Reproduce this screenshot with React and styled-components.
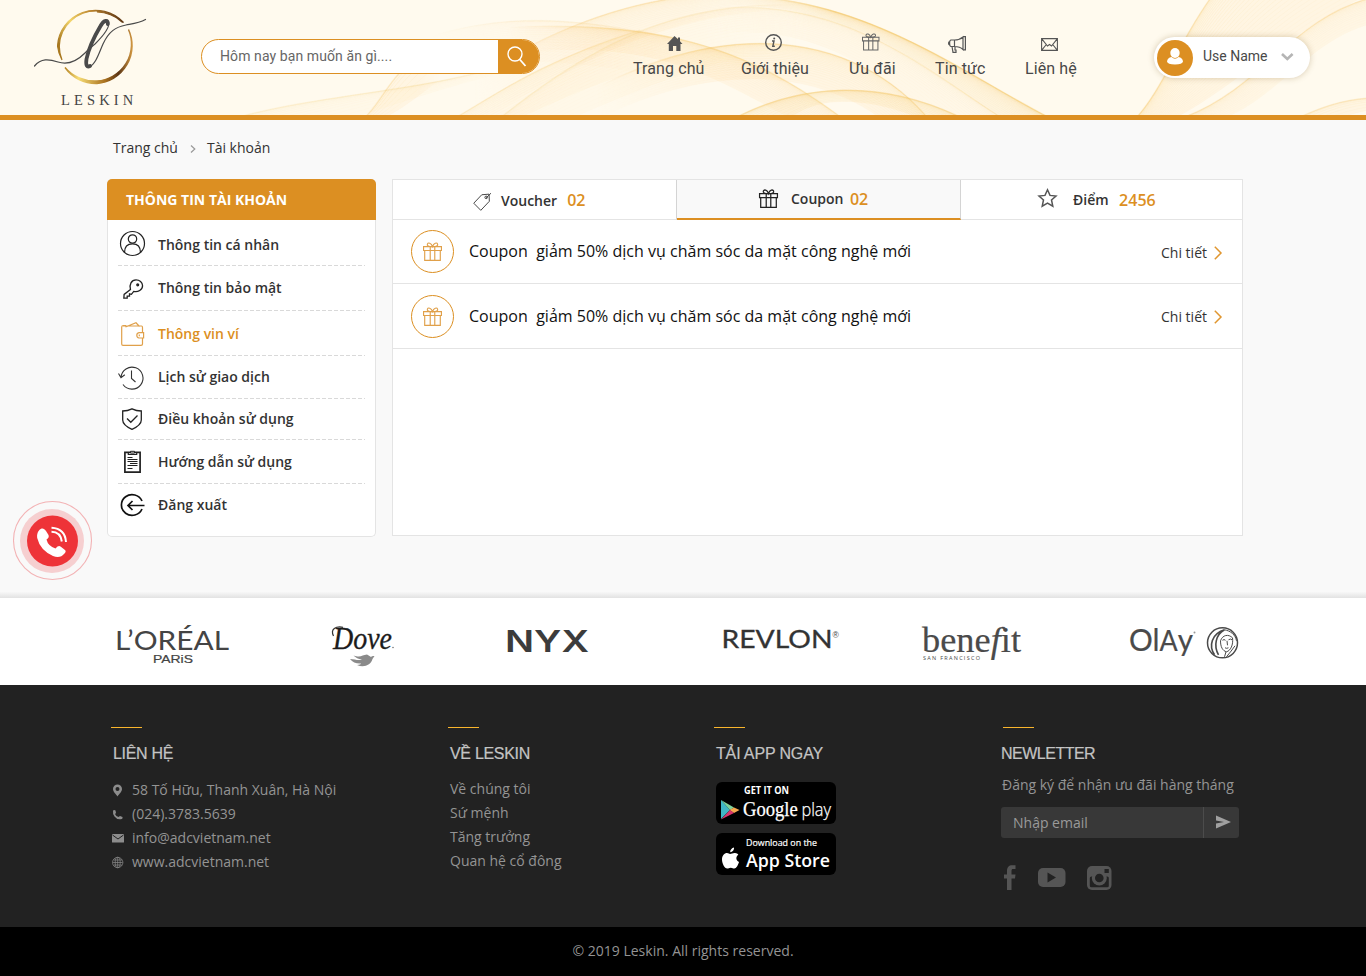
import React from "react";
import styled, { createGlobalStyle } from "styled-components";

const GOLD = "#dc8f22";
const OPEN = '"Open Sans", "Noto Sans", sans-serif';
const ROBOTO = 'Roboto, "Liberation Sans", sans-serif';
const ARIAL = '"Liberation Sans", Arial, sans-serif';

const GlobalStyle = createGlobalStyle`
  * { box-sizing: border-box; }
  body { margin: 0; background: #f9f9f9; font-family: ${OPEN}; color: #333; }
  a { color: inherit; text-decoration: none; }
  svg { display: block; flex: none; overflow: visible; }
`;

const Page = styled.div`
  width: 1366px;
  height: 976px;
  display: flex;
  flex-direction: column;
  overflow: hidden;
`;

/* ---------- header ---------- */

const Header = styled.header`
  position: relative;
  height: 120px;
  flex: none;
  display: flex;
  align-items: flex-start;
  background: #fffaee;
  border-bottom: 5px solid ${GOLD};
`;

const WaveArt = styled.svg`
  position: absolute;
  left: 0;
  top: 0;
  overflow: hidden;
`;

const LogoLink = styled.a`
  position: relative;
  margin-left: 25px;
  width: 130px;
  height: 115px;
`;

const SearchBox = styled.form`
  position: relative;
  display: flex;
  margin: 39px 0 0 46px;
  width: 339px;
  height: 35px;
  border: 1px solid ${GOLD};
  border-radius: 18px;
  background: #fff;
  overflow: hidden;
`;

const SearchHint = styled.span`
  flex: 1;
  padding-left: 18px;
  font: 400 14px/33px ${ROBOTO};
  letter-spacing: 0.09px;
  color: #666;
`;

const SearchButton = styled.span`
  width: 41px;
  height: 35px;
  padding: 6px 0 0 9px;
  background: ${GOLD};
`;

const Nav = styled.nav`
  position: relative;
  display: flex;
  margin: 32px 0 0 93px;
`;

const NavItem = styled.a`
  display: flex;
  flex-direction: column;
  width: ${(p) => p.$w}px;
  margin-right: ${(p) => p.$gap}px;
  font: 400 16px/20px ${ROBOTO};
  letter-spacing: 0.1px;
  color: #484848;
  white-space: nowrap;
`;

const NavGlyph = styled.span`
  height: 27px;
  padding: ${(p) => p.$top}px 0 0 ${(p) => p.$left}px;
`;

const UserPill = styled.div`
  position: relative;
  display: flex;
  align-items: center;
  margin: 37px 0 0 77px;
  width: 156px;
  height: 41px;
  padding-left: 3px;
  border-radius: 21px;
  background: #fff;
  box-shadow: 0 0 6px rgba(120, 90, 30, 0.3);
`;

const UserName = styled.span`
  width: 88px;
  padding: 0 0 3px 10px;
  font: 400 14px/20px ${ROBOTO};
  color: #484848;
  white-space: nowrap;
`;

/* ---------- body ---------- */

const Crumbs = styled.div`
  display: flex;
  align-items: center;
  height: 59px;
  padding: 0 0 3px 113px;
  font-size: 14px;
  line-height: 20px;
  color: #333;
`;

const CrumbArrow = styled.svg`
  margin: 2px 11px 0 12px;
`;

const Columns = styled.main`
  display: flex;
  align-items: flex-start;
  gap: 16px;
  padding-left: 107px;
  height: 413px;
`;

const SideCard = styled.aside`
  width: 269px;
  height: 358px;
  border: 1px solid #e4e4e4;
  border-top: 0;
  border-radius: 5px;
  background: #fff;
`;

const SideTitle = styled.h2`
  margin: 0 -1px;
  height: 41px;
  padding-left: 19px;
  border-radius: 5px 5px 0 0;
  background: ${GOLD};
  color: #fff;
  font: 700 14px/41px ${OPEN};
`;

const SideRow = styled.a`
  display: flex;
  height: ${(p) => p.$h}px;
  margin: 0 10px;
  background: ${(p) =>
    p.$last
      ? "none"
      : "repeating-linear-gradient(90deg, #d9d9d9 0 4px, transparent 4px 6px) left bottom / 100% 1px no-repeat"};
  color: ${(p) => (p.$active ? GOLD : "#333")};
`;

const SideGlyph = styled.span`
  width: 40px;
  padding: ${(p) => p.$top}px 0 0 ${(p) => p.$left}px;
`;

const SideLabel = styled.span`
  padding-top: ${(p) => p.$top}px;
  font: 600 14px/20px ${OPEN};
`;

const Panel = styled.section`
  width: 851px;
  height: 357px;
  border: 1px solid #e4e4e4;
  background: #fff;
`;

const Tabs = styled.div`
  display: flex;
  height: 40px;
`;

const Tab = styled.div`
  display: flex;
  align-items: flex-start;
  width: ${(p) => p.$w}px;
  padding-left: ${(p) => p.$pad}px;
  border-bottom: ${(p) => (p.$active ? `2px solid ${GOLD}` : "1px solid #e4e4e4")};
  border-right: ${(p) => (p.$last ? "0" : "1px solid #d4d4d4")};
  background: ${(p) => (p.$active ? "#f9f9f9" : "#fff")};
`;

const TabGlyph = styled.span`
  width: ${(p) => p.$w}px;
  padding-top: ${(p) => p.$top}px;
`;

const TabLabel = styled.span`
  padding-top: ${(p) => p.$top}px;
  margin-right: ${(p) => p.$gap}px;
  font: 600 14px/20px ${OPEN};
`;

const TabCount = styled.span`
  padding-top: ${(p) => p.$top}px;
  font: 600 16px/20px ${OPEN};
  color: ${GOLD};
`;

const CouponRow = styled.div`
  display: flex;
  align-items: center;
  height: ${(p) => p.$h}px;
  padding: 0 20px 0 18px;
  border-bottom: 1px solid #e4e4e4;
`;

const CouponBadge = styled.span`
  display: flex;
  align-items: center;
  justify-content: center;
  width: 43px;
  height: 43px;
  border: 1.3px solid ${GOLD};
  border-radius: 50%;
`;

const CouponText = styled.span`
  flex: 1;
  padding: 0 0 1px 15px;
  font: 400 16px/24px ${OPEN};
  letter-spacing: 0.01px;
  color: #111;
  white-space: pre;
`;

const DetailLink = styled.a`
  display: flex;
  align-items: center;
  gap: 7px;
  font: 400 14px/20px ${OPEN};
  padding-top: 2px;
`;

const CallButton = styled.a`
  position: absolute;
  left: 12px;
  top: 500px;
`;

/* ---------- brands ---------- */

const ShadowEdge = styled.div`
  height: 6px;
  flex: none;
  background: linear-gradient(#f7f7f7, #e2e2e2);
`;

const Brands = styled.section`
  display: flex;
  flex: none;
  height: 87px;
  background: #fff;
`;

const BrandSlot = styled.svg`
  margin-left: ${(p) => p.$gap}px;
`;

/* ---------- footer ---------- */

const Footer = styled.footer`
  display: grid;
  flex: none;
  grid-template-columns: 337px 266px 287px 1fr;
  height: 242px;
  padding: 42px 0 0 111px;
  background: #222;
  color: #949494;
`;

const FootCol = styled.div`
  display: flex;
  flex-direction: column;
  align-items: flex-start;
  padding-left: ${(p) => p.$pad}px;
`;

const FootRule = styled.div`
  width: 31px;
  height: 1px;
  margin-left: ${(p) => p.$shift}px;
  background: #f9b52c;
`;

const FootTitle = styled.h3`
  margin: 16px 0 0;
  font: 400 16px/20px ${ARIAL};
  letter-spacing: ${(p) => p.$ls ?? -0.3}px;
  color: #c4c4c4;
  -webkit-text-stroke: 0.2px #c4c4c4;
`;

const FootList = styled.ul`
  list-style: none;
  margin: ${(p) => p.$top}px 0 0;
  padding: 0;
`;

const FootItem = styled.li`
  display: flex;
  align-items: center;
  height: 24px;
  font: 400 14px/24px ${OPEN};
`;

const FootGlyph = styled.span`
  display: flex;
  width: 20px;
  margin-left: -1px;
  padding-top: 1px;
`;

const StoreBadge = styled.svg`
  margin-top: ${(p) => p.$top}px;
`;

const NewsText = styled.p`
  margin: 11px 0 0 1px;
  font: 400 14px/20px ${OPEN};
  white-space: nowrap;
`;

const NewsForm = styled.form`
  display: flex;
  width: 238px;
  height: 31px;
  margin-top: 12px;
  border-radius: 3px;
  background: #383838;
`;

const NewsHint = styled.span`
  width: 203px;
  padding-left: 12px;
  border-right: 1px solid #4c4c4c;
  font: 400 14px/31px ${OPEN};
  color: #9a9a9a;
`;

const NewsSend = styled.span`
  padding: 8px 0 0 12px;
`;

const Socials = styled.div`
  display: flex;
  align-items: center;
  gap: 22px;
  margin: 27px 0 0 2.5px;
`;

const Copyright = styled.div`
  flex: 1;
  background: #000;
  color: #949494;
  text-align: center;
  font: 400 14px/48px ${OPEN};
  letter-spacing: 0.01px;
`;

/* ---------- drawings ---------- */

/* A ribbon is a sheaf of thin curves blended between two edge curves; the
   lines are strongest at the first edge and thin out towards the second.
   An end that stops inside the header dissolves (fadeIn, fadeOut). */
const ribbons = [
  { a: [430, 108, 590, -8, 710, -22, 860, 4], b: [440, 150, 600, 40, 700, 0, 860, 10], n: 24, o: 0.11, fadeIn: true, fadeOut: true },
  { a: [720, -4, 860, -8, 960, 72, 1050, 118], b: [690, 6, 850, -6, 920, 66, 1002, 118], n: 24, o: 0.19, fadeIn: true },
  { a: [500, 118, 620, 22, 700, 2, 810, 5], b: [520, 140, 640, 90, 760, 30, 840, 60], n: 24, o: 0.06, fadeOut: true },
  { a: [700, 10, 840, -8, 920, 66, 1002, 118], b: [680, 40, 800, 10, 880, 70, 930, 118], n: 22, o: 0.08, fadeIn: true },
  { a: [560, 110, 690, 24, 840, 16, 928, 118], b: [560, 140, 680, 66, 800, 60, 880, 118], n: 26, o: 0.14, fadeIn: true },
  { a: [470, 30, 660, 14, 750, 50, 842, 118], b: [470, 60, 640, 30, 700, 70, 790, 118], n: 24, o: 0.13, fadeIn: true },
  { a: [735, 118, 800, 84, 880, 78, 962, 118], b: [790, 118, 820, 94, 870, 98, 920, 118], n: 14, o: 0.18 },
  { a: [235, 118, 330, 92, 430, 92, 520, 60], b: [330, 124, 400, 105, 440, 85, 560, 60], n: 14, o: 0.07, fadeOut: true },
  { a: [364, 118, 376, 108, 384, 90, 400, 72], b: [384, 118, 410, 105, 430, 85, 452, 72], n: 9, o: 0.14, fadeOut: true },
  { a: [455, 118, 500, 92, 540, 62, 640, 30], b: [515, 120, 570, 95, 620, 70, 720, 50], n: 20, o: 0.09, fadeOut: true },
  { a: [400, 48, 480, 14, 560, 12, 680, 40], b: [420, 80, 520, 50, 590, 60, 720, 90], n: 22, o: 0.05, fadeIn: true, fadeOut: true },
  { a: [1136, 118, 1162, 90, 1180, 40, 1212, -4], b: [1175, 118, 1230, 90, 1290, 30, 1370, -6], n: 34, o: 0.14 },
  { a: [1182, 118, 1260, 90, 1290, 20, 1370, -2], b: [1225, 118, 1280, 95, 1310, 40, 1370, 24], n: 20, o: 0.11 },
  { a: [1298, 118, 1320, 108, 1340, 100, 1370, 98], b: [1340, 118, 1350, 114, 1360, 112, 1370, 110], n: 8, o: 0.14 },
];

const curve = (p) => `M${p[0]} ${p[1]}C${p.slice(2).join(" ")}`;
const blend = (a, b, t) => a.map((v, i) => +(v + (b[i] - v) * t).toFixed(1));
const sheet = ({ a, b }) =>
  `${curve(a)}L${b[6]} ${b[7]}C${b[4]} ${b[5]} ${b[2]} ${b[3]} ${b[0]} ${b[1]}Z`;

const fadeStops = (r) => [
  [0, r.fadeIn ? 0 : 1],
  [0.1, r.fadeIn ? 0 : 1],
  [0.4, 1],
  [0.6, 1],
  [0.88, r.fadeOut ? 0 : 1],
  [1, r.fadeOut ? 0 : 1],
];

const Waves = () => (
  <WaveArt width="1366" height="115" viewBox="0 0 1366 115">
    {ribbons.map((r, k) => {
      const x1 = Math.min(r.a[0], r.b[0]);
      const x2 = Math.max(r.a[6], r.b[6]);
      return (
        <g key={k}>
          <linearGradient id={`fade${k}`} gradientUnits="userSpaceOnUse" x1={x1} y1="0" x2={x2} y2="0">
            {fadeStops(r).map(([at, v]) => (
              <stop key={at} offset={at} stopColor="#fff" stopOpacity={v} />
            ))}
          </linearGradient>
          <mask id={`mask${k}`} maskUnits="userSpaceOnUse" x="0" y="0" width="1366" height="115">
            <rect width="1366" height="115" fill={`url(#fade${k})`} />
          </mask>
          <g mask={`url(#mask${k})`} fill="none" stroke="#f3c25c">
            <path d={sheet(r)} fill="#fbd68a" fillOpacity={r.o * 0.85} stroke="none" />
            {Array.from({ length: r.n }, (_, i) => {
              const t = i / (r.n - 1);
              return (
                <path key={i} d={curve(blend(r.a, r.b, t * t))} strokeWidth="0.7" strokeOpacity={r.o * (1.3 - t)} />
              );
            })}
            <path d={curve(r.a)} strokeWidth="1.6" strokeOpacity={r.o} />
          </g>
        </g>
      );
    })}
  </WaveArt>
);

const Logo = () => (
  <svg width="130" height="115" viewBox="0 0 130 115">
    <defs>
      <linearGradient id="ringTop" x1="0" y1="0.6" x2="1" y2="0.2">
        <stop offset="0" stopColor="#a8781f" />
        <stop offset="0.3" stopColor="#f3d56b" />
        <stop offset="0.65" stopColor="#b9822c" />
        <stop offset="1" stopColor="#5b3413" />
      </linearGradient>
      <linearGradient id="ringLow" x1="0" y1="0.5" x2="1" y2="0.5">
        <stop offset="0" stopColor="#b68424" />
        <stop offset="0.2" stopColor="#f6dc74" />
        <stop offset="0.6" stopColor="#a8701f" />
        <stop offset="0.8" stopColor="#5b3413" />
        <stop offset="1" stopColor="#cf9540" />
      </linearGradient>
    </defs>
    <path d="M37 60A37.5 37.5 0 0 1 32.500 46A38 37.500 0 0 1 98.500 22.500L97 22A37.500 36 0 0 0 72 12L74 11A37 36 0 0 0 34.300 46A37 37 0 0 0 37 60Z" fill="url(#ringTop)" stroke="url(#ringTop)" strokeWidth="1.200" />
    <path d="M103.500 29.500A38 38 0 0 1 72 83.500A38 38 0 0 1 40 67.500A38 36 0 0 0 72 81A37 37 0 0 0 103.500 29.500Z" fill="url(#ringLow)" stroke="url(#ringLow)" strokeWidth="1.400" />
    <g fill="none" stroke="#4a4a4a" strokeLinecap="round">
      <path d="M9.500 66C16 58 24 59 33 62C45 66 54 59 60 53C62 51 66 47 70 44C78 36 85 27 83.500 22.500" strokeWidth="1.200" />
      <path d="M82.800 24C83.500 19.500 79 19.500 75.500 26C69 37 63.500 49 61.500 59C60.500 65.500 62 67.500 65 66" strokeWidth="3.800" />
      <path d="M64 67C71 64 74 53 78 44C84 31 91 27 101 25C109 23.500 114 23 120.500 19.500" strokeWidth="1.200" />
    </g>
    <text x="36" y="104.700" fontFamily="Liberation Serif, serif" fontSize="14.500" letterSpacing="4.150" fill="#444">LESKIN</text>
  </svg>
);

const GiftIcon = ({ size = 20, color = "currentColor", sw = 1.1 }) => (
  <svg width={size} height={size} viewBox="0 0 20 20" fill="none" stroke={color} strokeWidth={sw}>
    <path d="M.6 4.800H19.400V9H.6ZM1.800 9V19.400H18.200V9M7.600 4.800V19.400M12.400 4.800V19.400" />
    <path d="M10 4.800C6 4.900 4 4 4.600 2.200C5.400.2 8.600.8 10 4.800C11.400.8 14.600.2 15.400 2.200C16 4 14 4.900 10 4.800Z" />
  </svg>
);

const ChevronRight = ({ w, h, color, sw }) => (
  <svg width={w} height={h} viewBox={`0 0 ${w} ${h}`} fill="none" stroke={color} strokeWidth={sw}>
    <path d={`M.8 .8L${w - 1} ${h / 2}L.8 ${h - 0.8}`} />
  </svg>
);

const navItems = [
  {
    label: "Trang chủ", w: 72, gap: 36, left: 34, top: 4,
    icon: (
      <svg width="16" height="15" viewBox="0 0 16 15" fill="#555">
        <path d="M7.500 0L11 3.300V1.500H13V5.200L15.500 8H13.500V15H9.300V10H6V15H1.800V8H0Z" />
      </svg>
    ),
  },
  {
    label: "Giới thiệu", w: 68, gap: 40, left: 24, top: 2,
    icon: (
      <svg width="17" height="17" viewBox="0 0 17 17" fill="none" stroke="#555">
        <circle cx="8.500" cy="8.500" r="7.800" strokeWidth="1.400" />
        <path d="M7 7H9L7.800 12.300H9.800" strokeWidth="1.400" />
        <circle cx="9.200" cy="4.500" r="1" fill="#555" stroke="none" />
      </svg>
    ),
  },
  {
    label: "Ưu đãi", w: 46, gap: 40, left: 13, top: 1,
    icon: <GiftIcon size={17.5} color="#666" sw={1.15} />,
  },
  {
    label: "Tin tức", w: 50, gap: 40, left: 13, top: 4,
    icon: (
      <svg width="18" height="17" viewBox="0 0 18 17" fill="none" stroke="#555" strokeWidth="1.200">
        <path d="M6.500 4C10 4 13 2.800 15 1V13.500C13 11.600 10 10.500 6.500 10.500ZM15 .6H17.400V13.800H15M6.500 4H3C1.800 4 1.600 5 1.600 7.300C1.600 9.600 1.800 10.500 3 10.500H6.500M1.600 5.500C.2 6 .2 8.500 1.600 9M4 10.500L5 16.300H8V14H7V10.500" />
      </svg>
    ),
  },
  {
    label: "Liên hệ", w: 52, gap: 0, left: 16, top: 6,
    icon: (
      <svg width="17" height="13" viewBox="0 0 17 13" fill="none" stroke="#555" strokeWidth="1.100">
        <path d="M.6 .6H16.400V12.400H.6ZM.6 .6L6.500 8L8.500 6.500L10.500 8L16.400 .6M.6 12.400L5.300 6.500M16.400 12.400L11.700 6.500" />
      </svg>
    ),
  },
];

const sideItems = [
  {
    label: "Thông tin cá nhân", h: 46, text: 15, left: 2, top: 11,
    icon: (
      <svg width="26" height="26" viewBox="0 0 26 26" fill="none" stroke="#222" strokeWidth="1.200">
        <circle cx="12.500" cy="12.500" r="12" />
        <circle cx="12.500" cy="8" r="4.200" />
        <path d="M4.500 21.500C4.500 15.500 8 12.900 12.500 12.900S20.500 15.500 20.500 21.500" />
      </svg>
    ),
  },
  {
    label: "Thông tin bảo mật", h: 45, text: 12, left: 5, top: 13,
    icon: (
      <svg width="20.500" height="20.500" viewBox="0 0 22 22" fill="none" stroke="#222" strokeWidth="1.400">
        <path d="M8 11.200L1.200 16.500L.9 20.600H4.500V18.300H7V16L9 16.500L11.500 13.300C16 14.600 21 11.500 21 7.300C21 3.500 17.600 .9 14 .9C9 .9 6.500 6 8 11.200Z" />
        <circle cx="15.800" cy="6.300" r="1" fill="#222" />
      </svg>
    ),
  },
  {
    label: "Thông vin ví", h: 45, text: 13, left: 3, top: 11, active: true,
    icon: (
      <svg width="24" height="24" viewBox="0 0 24 24" fill="none" stroke="#e0a04a" strokeWidth="1.200">
        <path d="M2 4H20.500Q21.500 4 21.500 5.500V10.500M21.500 16V22Q21.500 23.300 20 23.300H2Q.7 23.300 .7 22V5Q.7 3.500 2.500 3.500H5M4.500 5L15 .8L18.500 4.500" />
        <path d="M22.600 10.600H18Q15.800 11 15.800 13.300Q15.800 15.800 18 16H22.600ZM18.300 12.500V14.300" />
      </svg>
    ),
  },
  {
    label: "Lịch sử giao dịch", h: 43, text: 11, left: 0, top: 9.5,
    icon: (
      <svg width="26" height="24" viewBox="0 0 26 24" fill="none" stroke="#333" strokeWidth="1.100">
        <path d="M3 11.500A11 11 0 1 1 5 18.500M.5 7.500L3 11.800L6.800 8.800M13.500 4.500V12.500L17.500 16" />
      </svg>
    ),
  },
  {
    label: "Điều khoản sử dụng", h: 41, text: 10, left: 4, top: 9,
    icon: (
      <svg width="20" height="22" viewBox="0 0 20 22" fill="none" stroke="#222" strokeWidth="1.300">
        <path d="M10 .8C13 2.300 16 3 19.300 3V12C19.300 17 14 19.500 10 21.300C6 19.500 .7 17 .7 12V3C4 3 7 2.300 10 .8ZM5 10.500L8.800 14.300L15.500 7.500" />
      </svg>
    ),
  },
  {
    label: "Hướng dẫn sử dụng", h: 44, text: 12, left: 6, top: 11,
    icon: (
      <svg width="17" height="22" viewBox="0 0 17 22" fill="none" stroke="#222">
        <path d="M.9 1.400H16.100V21.100H.9Z" strokeWidth="1.700" />
        <path d="M4.300 1.500V3.500H12.700V1.500" strokeWidth="1.200" />
        <path d="M3.500 6.500H8.500M3.500 8.500H13.500M3.500 10.500H13.500M6 12.500H13.500M3.500 14.500H13.500M3.500 17.500H8.500" strokeWidth="1" />
        <path d="M6.500 .3H10.500V2H6.500Z" fill="#fff" strokeWidth="1" />
      </svg>
    ),
  },
  {
    label: "Đăng xuất", h: 44, text: 11, left: 2, top: 10, last: true,
    icon: (
      <svg width="25" height="23" viewBox="0 0 25 23" fill="none" stroke="#111" strokeWidth="1.700">
        <path d="M22 7A10.700 10.400 0 1 0 22 15M24.500 11.500H8M12.500 7L8 11.500L12.500 16" />
      </svg>
    ),
  },
];

const CallArt = () => (
  <svg width="81" height="81" viewBox="0 0 81 81">
    <circle cx="40.500" cy="40.500" r="39" fill="none" stroke="#f3b3b5" strokeWidth="1.100" />
    <circle cx="40" cy="41" r="32" fill="#f6cfd0" />
    <circle cx="40.500" cy="41" r="25.500" fill="#ee3338" />
    <path d="M27 30.500C29.500 27.500 32 28 34 31L36.500 35Q37.500 37.500 34.500 39.500Q36 46 43.500 48.500Q46.500 45 48.500 46.500L53 50Q54.500 51.500 52.500 53.500Q48 59 41 56Q28 50 25.200 38Q24.500 33.500 27 30.500Z" fill="#fff" />
    <path d="M39.500 31.800Q48.500 32 49.800 41.500M39.500 27.800Q53 28.500 54 42" fill="none" stroke="#fff" strokeWidth="2" />
  </svg>
);

const Brand = ({ gap, w, children }) => (
  <BrandSlot $gap={gap} width={w} height="87" viewBox={`0 0 ${w} 87`}>
    {children}
  </BrandSlot>
);

const BrandStrip = () => (
  <Brands>
    <Brand gap={115} w={115}>
      <g fill="#444">
        <text x="0" y="52" fontFamily="Lato, sans-serif" fontSize="27.500" textLength="114" lengthAdjust="spacingAndGlyphs">L’ORÉAL</text>
        <text x="38" y="65" fontSize="11" fontFamily="Liberation Sans, sans-serif" textLength="40" lengthAdjust="spacingAndGlyphs" stroke="#444" strokeWidth=".2">PARiS</text>
      </g>
    </Brand>
    <Brand gap={101} w={64}>
      <text x="2" y="50.500" fontFamily="Liberation Serif, serif" fontStyle="italic" fontSize="31" fill="#1c1c1c" stroke="#1c1c1c" strokeWidth=".3" textLength="59" lengthAdjust="spacingAndGlyphs">Dove</text>
      <path d="M2.500 38C-1 31 5 28 12 29.300" fill="none" stroke="#333" strokeWidth="1.200" />
      <circle cx="62" cy="49.500" r=".8" fill="#777" />
      <path d="M19 61C24 61 27 63 31 61.500C26 61 23 58 22.500 57.500C30 60 31 57 36 56.500Q39 58 40 59Q41 57.500 43.500 58L41.500 61C40 67 33 70 26 67Q30 66.500 30 65.500Q23 66 19 61Z" fill="#8a8a8a" />
    </Brand>
    <Brand gap={111} w={84}>
      <text x="-1" y="54" fontFamily="Inter, sans-serif" fontWeight="600" fontSize="30" fill="#3c3c3c" textLength="84" lengthAdjust="spacingAndGlyphs">NYX</text>
    </Brand>
    <Brand gap={132} w={120}>
      <text x="-.5" y="50" fontFamily="Lato, sans-serif" fontSize="24.500" fill="#333" stroke="#333" strokeWidth=".3" textLength="111" lengthAdjust="spacingAndGlyphs">REVLON</text>
      <text x="110.500" y="39.500" fontFamily="Liberation Sans, sans-serif" fontSize="8.500" fill="#444">®</text>
    </Brand>
    <Brand gap={79} w={102}>
      <g fill="#4a4a4a" stroke="#4a4a4a" strokeWidth=".2">
        <text x="1" y="53.500" fontFamily="Liberation Serif, serif" fontSize="35" textLength="99" lengthAdjust="spacingAndGlyphs">
          bene<tspan fontStyle="italic">f</tspan>it
        </text>
        <text x="2" y="61.500" fontFamily="Open Sans, sans-serif" fontSize="5.500" textLength="57" strokeWidth="0">SAN FRANCISCO</text>
      </g>
    </Brand>
    <Brand gap={107} w={112}>
      <text x="-1" y="52.500" fontFamily="Lato, sans-serif" fontSize="31" fill="#4a4a4a" stroke="#4a4a4a" strokeWidth=".2" textLength="64" lengthAdjust="spacingAndGlyphs">
        <tspan>O</tspan>l<tspan fontSize="28">A</tspan>y
      </text>
      <circle cx="64.500" cy="34.500" r="1" fill="#999" />
      <g transform="translate(92.500 44.800)" fill="none" stroke="#4a4a4a" strokeWidth="1">
        <circle r="15" strokeWidth="1.500" />
        <path d="M-8 12C-14 3 -11 -9 2 -13C-7 -8 -9 3 -4 12" strokeWidth="1.600" />
        <path d="M2 -13C8 -12 13 -8 14 -2M-2 -2C0 -8 6 -9 10 -5C11 2 8 8 4 9C0 8 -2 4 -2 -2M0 -2.500Q1.500 -4 3 -2.500M6 -3Q8 -4.500 9.500 -3M4.500 -2L5 2.500M2.500 5Q4 6 6 5M3.500 9L2 14M12.500 3Q9 8 4 14" />
      </g>
    </Brand>
  </Brands>
);

const GoogleBadge = () => (
  <StoreBadge $top={18} width="120" height="42" viewBox="0 0 120 42">
    <rect width="120" height="42" rx="6" fill="#000" />
    <path d="M5 18L14 28L5 37Z" fill="#3fb7c4" />
    <path d="M5 18L18 25.500L14 28Z" fill="#7ed39a" />
    <path d="M18 25.500L23.500 28L18 31L13.500 28Z" fill="#f6a94f" />
    <path d="M14 28L18 31L5 37.500Z" fill="#d8366b" />
    <g fill="#fff">
      <text x="28" y="11.500" fontFamily="Open Sans, sans-serif" fontWeight="700" fontSize="10" textLength="45" lengthAdjust="spacingAndGlyphs">GET IT ON</text>
      <text x="27" y="34" fontFamily="Liberation Serif, serif" fontSize="20.500" textLength="88" lengthAdjust="spacingAndGlyphs" stroke="#fff" strokeWidth=".25">
        Google<tspan dx="4" fontFamily="Open Sans, sans-serif" fontWeight="300" fontSize="18">play</tspan>
      </text>
    </g>
  </StoreBadge>
);

const AppleBadge = () => (
  <StoreBadge $top={9} width="120" height="42" viewBox="0 0 120 42">
    <rect width="120" height="42" rx="6" fill="#000" />
    <path d="M14 21C15.500 21 17 19.800 19 20C20.500 20 21.700 20.800 22.300 21.800C19.500 23.500 19.800 27.500 23 29C22 32 20.300 35.500 18.300 35.500C17 35.500 16.500 34.700 14.800 34.700C13 34.700 12.500 35.500 11.300 35.500C8.500 35.500 6 30.500 6 26.500C6 22.500 8.500 20 11 20C12.500 20 13.300 21 14 21ZM14.200 19.300C14 17 15.800 15 18 14.600C18.300 17 16.500 19.300 14.200 19.300Z" fill="#fff" />
    <g fill="#fff" fontFamily="Open Sans, sans-serif">
      <text x="30" y="13.300" fontSize="9.500" textLength="71" lengthAdjust="spacingAndGlyphs" stroke="#fff" strokeWidth=".2">Download on the</text>
      <text x="30" y="33.500" fontSize="18.500" fontWeight="600" textLength="84" lengthAdjust="spacingAndGlyphs">App Store</text>
    </g>
  </StoreBadge>
);

const contacts = [
  {
    text: "58 Tố Hữu, Thanh Xuân, Hà Nội",
    icon: (
      <svg width="12" height="13" viewBox="0 0 12 13" fill="#8c8c8c">
        <path fillRule="evenodd" d="M5.500 .5A4.500 4.500 0 0 1 10 5C10 8 7 10 5.500 12.500C4 10 1 8 1 5A4.500 4.500 0 0 1 5.500 .5ZM5.500 3A2 2 0 1 0 5.500 7A2 2 0 1 0 5.500 3Z" />
      </svg>
    ),
  },
  {
    text: "(024).3783.5639",
    icon: (
      <svg width="12" height="11" viewBox="0 0 12 11" fill="#8c8c8c">
        <path d="M1 1.500Q2.500 .5 3.500 1.500L4 4L3 5Q4 7.500 6.500 8L8 7L10.500 8Q11 9.500 9.800 10Q5 11 2.500 7.500Q.5 4.500 1 1.500Z" />
      </svg>
    ),
  },
  {
    text: "info@adcvietnam.net",
    icon: (
      <svg width="12" height="9" viewBox="0 0 12 9">
        <rect width="12" height="8.500" rx=".6" fill="#8c8c8c" />
        <path d="M.5 1L6 5L11.500 1" fill="none" stroke="#222" strokeWidth="1" />
      </svg>
    ),
  },
  {
    text: "www.adcvietnam.net",
    icon: (
      <svg width="12" height="12" viewBox="0 0 12 12" fill="none" stroke="#8c8c8c" strokeWidth=".7">
        <circle cx="5.700" cy="5.500" r="5.200" />
        <ellipse cx="5.700" cy="5.500" rx="2.500" ry="5.200" />
        <path d="M.7 5.500H10.700M5.700 .5V10.500M1.500 3H10M1.500 8H10" />
      </svg>
    ),
  },
];

const links = ["Về chúng tôi", "Sứ mệnh", "Tăng trưởng", "Quan hệ cổ đông"];

export default function App() {
  return (
    <Page>
      <GlobalStyle />
      <Header>
        <Waves />
        <LogoLink href="#"><Logo /></LogoLink>
        <SearchBox>
          <SearchHint>Hôm nay bạn muốn ăn gì....</SearchHint>
          <SearchButton>
            <svg width="20" height="21" viewBox="0 0 20 21" fill="none" stroke="#fff" strokeWidth="1.400">
              <circle cx="8" cy="8" r="7" />
              <path d="M12.800 13.500L18.500 20" strokeWidth="1.800" />
            </svg>
          </SearchButton>
        </SearchBox>
        <Nav>
          {navItems.map((n) => (
            <NavItem key={n.label} href="#" $w={n.w} $gap={n.gap}>
              <NavGlyph $left={n.left} $top={n.top}>{n.icon}</NavGlyph>
              {n.label}
            </NavItem>
          ))}
        </Nav>
        <UserPill>
          <svg width="36" height="36" viewBox="0 0 36 36">
            <circle cx="18" cy="18" r="18" fill={GOLD} />
            <ellipse cx="18" cy="13" rx="4.700" ry="5" fill="#fff" />
            <path d="M10 21.500Q10.500 17.500 14.500 17Q18 20.500 21.500 17Q25.500 17.500 26 21.500Q25.500 24.500 18 24.500T10 21.500Z" fill="#fff" />
          </svg>
          <UserName>Use Name</UserName>
          <svg width="13" height="8" viewBox="0 0 13 8" fill="none" stroke="#b5b5b5" strokeWidth="2.600">
            <path d="M1 0L6.300 5L11.600 0" />
          </svg>
        </UserPill>
      </Header>

      <Crumbs>
        <span>Trang chủ</span>
        <CrumbArrow width="6" height="8" viewBox="0 0 6 8" fill="none" stroke="#999" strokeWidth="1.200">
          <path d="M1 .5L4.800 4L1 7.500" />
        </CrumbArrow>
        <span>Tài khoản</span>
      </Crumbs>

      <Columns>
        <SideCard>
          <SideTitle>THÔNG TIN TÀI KHOẢN</SideTitle>
          {sideItems.map((s) => (
            <SideRow key={s.label} href="#" $h={s.h} $active={s.active} $last={s.last}>
              <SideGlyph $left={s.left} $top={s.top}>{s.icon}</SideGlyph>
              <SideLabel $top={s.text}>{s.label}</SideLabel>
            </SideRow>
          ))}
        </SideCard>

        <Panel>
          <Tabs>
            <Tab $w={284} $pad={80}>
              <TabGlyph $w={28} $top={13}>
                <svg width="18.500" height="18.500" viewBox="0 0 19 19" fill="none" stroke="#444" strokeWidth="1">
                  <path d="M.8 10.500L9 1.800L16.500 1.200L16.800 8.500L8 17.800ZM18.500 .2L13.500 5" />
                  <circle cx="13.500" cy="4.500" r="1.300" />
                </svg>
              </TabGlyph>
              <TabLabel $top={11} $gap={10}>Voucher</TabLabel>
              <TabCount $top={10}>02</TabCount>
            </Tab>
            <Tab $w={284} $pad={82} $active>
              <TabGlyph $w={32} $top={9}><GiftIcon size={19} color="#222" sw={1.3} /></TabGlyph>
              <TabLabel $top={9} $gap={6.5}>Coupon</TabLabel>
              <TabCount $top={9}>02</TabCount>
            </Tab>
            <Tab $w={281} $pad={77} $last>
              <TabGlyph $w={35} $top={8}>
                <svg width="20" height="20" viewBox="0 0 20 20" fill="none" stroke="#555" strokeWidth="1.500">
                  <path d="M9.500 1.800L12 7.400L18 8L13.500 12L14.800 18.200L9.500 15.200L4.200 18.200L5.500 12L1 8L7 7.400Z" />
                </svg>
              </TabGlyph>
              <TabLabel $top={10} $gap={10.5}>Điểm</TabLabel>
              <TabCount $top={10}>2456</TabCount>
            </Tab>
          </Tabs>
          {[64, 65].map((h) => (
            <CouponRow key={h} $h={h}>
              <CouponBadge><GiftIcon size={19} color="#e0a04a" sw={1.2} /></CouponBadge>
              <CouponText>{"Coupon  giảm 50% dịch vụ chăm sóc da mặt công nghệ mới"}</CouponText>
              <DetailLink href="#">
                Chi tiết
                <ChevronRight w={8} h={14} color="#e0962f" sw={1.5} />
              </DetailLink>
            </CouponRow>
          ))}
        </Panel>
      </Columns>

      <ShadowEdge />
      <BrandStrip />

      <Footer>
        <FootCol $pad={2}>
          <FootRule $shift={-2} />
          <FootTitle>LIÊN HỆ</FootTitle>
          <FootList $top={14}>
            {contacts.map((c) => (
              <FootItem key={c.text}>
                <FootGlyph>{c.icon}</FootGlyph>
                {c.text}
              </FootItem>
            ))}
          </FootList>
        </FootCol>
        <FootCol $pad={2}>
          <FootRule $shift={-2} />
          <FootTitle>VỀ LESKIN</FootTitle>
          <FootList $top={13}>
            {links.map((l) => <FootItem key={l}>{l}</FootItem>)}
          </FootList>
        </FootCol>
        <FootCol $pad={2}>
          <FootRule $shift={-2} />
          <FootTitle $ls={-0.15}>TẢI APP NGAY</FootTitle>
          <GoogleBadge />
          <AppleBadge />
        </FootCol>
        <FootCol $pad={0}>
          <FootRule $shift={2} />
          <FootTitle $ls={-0.5}>NEWLETTER</FootTitle>
          <NewsText>Đăng ký để nhận ưu đãi hàng tháng</NewsText>
          <NewsForm>
            <NewsHint>Nhập email</NewsHint>
            <NewsSend>
              <svg width="15" height="14" viewBox="0 0 15 14" fill="#a0a0a0">
                <path d="M0 .5L15 7L0 13.500V8.500L8 7L0 5.500Z" />
              </svg>
            </NewsSend>
          </NewsForm>
          <Socials>
            <svg width="12" height="25" viewBox="0 0 12 25" fill="#555">
              <path d="M3 25V13.500H0V9.500H3V6C3 2 5 .2 8 .2H11.500V4H9C8 4 7.500 4.500 7.500 6V9.500H11.500L11 13.500H7.500V25Z" />
            </svg>
            <svg width="27" height="19" viewBox="0 0 27 19">
              <rect width="27.500" height="19" rx="5" fill="#555" />
              <path d="M9.500 4.500L18 9.500L9.500 14.500Z" fill="#222" />
            </svg>
            <svg width="25" height="24" viewBox="0 0 25 24" fill="#555">
              <rect width="24.500" height="24" rx="5" />
              <rect x="2.800" y="10.500" width="19" height="10.700" rx="1.500" fill="#222" />
              <circle cx="12.300" cy="12" r="7.500" />
              <circle cx="12.300" cy="12" r="4.300" fill="#222" />
              <rect x="17.500" y="3" width="4.300" height="4" fill="#222" />
            </svg>
          </Socials>
        </FootCol>
      </Footer>
      <Copyright>© 2019 Leskin. All rights reserved.</Copyright>
      <CallButton href="#"><CallArt /></CallButton>
    </Page>
  );
}
